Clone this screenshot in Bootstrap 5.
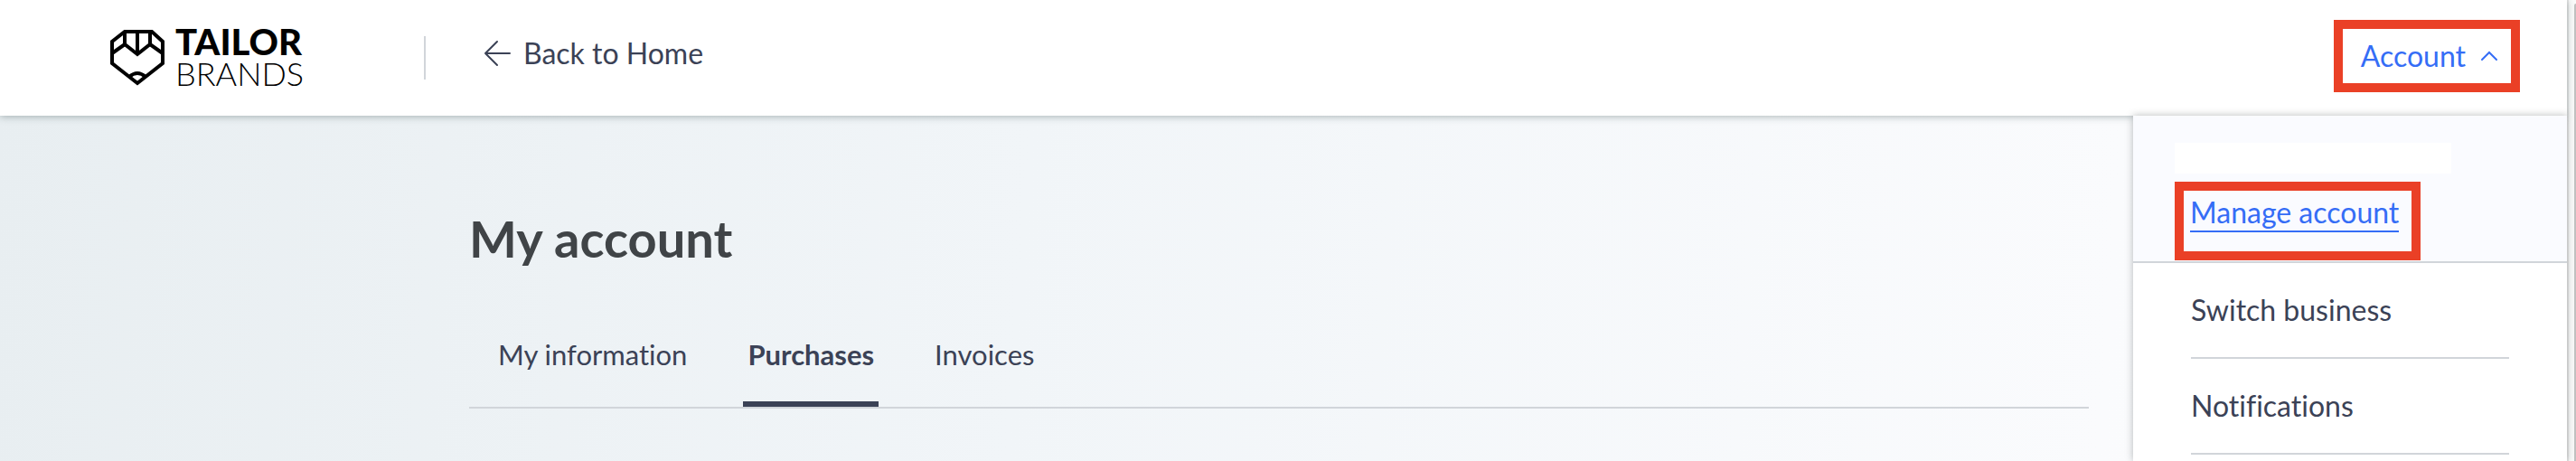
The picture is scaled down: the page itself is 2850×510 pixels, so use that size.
<!DOCTYPE html>
<html lang="en">
<head>
<meta charset="utf-8">
<meta name="viewport" content="width=device-width, initial-scale=1">
<title>My account</title>
<link href="https://cdn.jsdelivr.net/npm/bootstrap@5.3.0/dist/css/bootstrap.min.css" rel="stylesheet">
<style>
  :root { --ink: #3b4256; --line: #d1d5da; --brand-blue: #356df6; --mark-red: #ea4026; }
  body { font-family: Lato, "Open Sans", sans-serif; font-size: 32px; line-height: 40px; color: var(--ink); background: #fff; font-variant-ligatures: none; }
  a { color: inherit; text-decoration: none; }
  .page-area { background: linear-gradient(94deg, #e8eef1 0%, #f1f5f8 40%, #fafbfd 82%, #fdfdfe 100%); padding-bottom: 56px; }
  .topbar { height: 128px; padding-left: 122px; padding-right: 52px; box-shadow: 0 1px 8px rgba(40, 60, 60, .36); z-index: 2; }
  .brand-logo { gap: 12px; width: 216px; color: #000; }
  .brand-words { line-height: 35px; }
  .brand-strong { font-size: 40px; font-weight: 900; }
  .brand-thin { font-size: 36px; font-weight: 300; }
  .split { width: 2px; height: 48px; margin-left: 131px; margin-right: 64px; background: var(--line); }
  .back-link { gap: 14px; padding-bottom: 10px; }
  .marked { border: 10px solid var(--mark-red); }
  .account-btn { height: 80px; gap: 16px; padding: 0 14px 0 20px; margin-top: -4px; background: #fff; color: var(--brand-blue); }
  .account-menu { position: absolute; top: 128px; bottom: 0; right: 0; width: 480px; background: #fff; z-index: 3; box-shadow: 0 0 8px rgba(40, 50, 50, .34); }
  .menu-head { background: #fafbff; padding: 30px 46px 0; border-bottom: 2px solid var(--line); }
  .user-name { width: 306px; height: 34px; background: #fff; }
  .manage-box { margin-top: 9px; margin-bottom: 1px; height: 87px; width: 272px; padding: 4px 7px; }
  .manage-link { color: var(--brand-blue); border-bottom: 2px solid; line-height: 40px; }
  .menu-items { padding: 0 64px; }
  .menu-items a { display: block; padding: 32px 0; border-bottom: 2px solid var(--line); }
  .page-scroll { padding-right: 10px; }
  .account-main { max-width: 1792px; padding-top: 100px; }
  .account-main h1 { font-size: 56px; line-height: 72px; font-weight: 700; color: #404447; margin-bottom: 68px; }
  .account-tabs { gap: 62px; padding-left: 32px; border-bottom: 2px solid var(--line); font-size: 31px; }
  .account-tabs a { padding: 4px 0 32px; border-bottom: 6px solid transparent; }
  .account-tabs a.active { padding-left: 5px; padding-right: 5px; font-weight: 700; border-color: var(--ink); }
  .gutter { width: 10px; padding-top: 4px; padding-left: 6px; border-left: 2px solid #e7e7e7; background: #fafafa; }
  .thumb { background: #c1c1c1; border-radius: 4px 0 0 0; }
</style>
</head>
<body>
<div class="d-flex min-vh-100">
  <div class="page-area d-flex flex-column flex-grow-1 position-relative">
    <header class="topbar d-flex align-items-center bg-white position-relative">
      <a href="#" class="brand-logo d-flex align-items-center" aria-label="Tailor Brands home">
        <svg class="flex-shrink-0" width="60" height="64" viewBox="0 0 60 64" fill="none" stroke="#000" stroke-width="4" aria-hidden="true">
          <path d="M16 3H46L58 14V38L30 60L2 38V14Z"/>
          <path d="M2 27L16 17L30 28L44 17L58 27M16 3V17M30 3V28M44 3V17M21 53Q30 45 39 53"/>
        </svg>
        <span class="brand-words d-flex flex-column"><span class="brand-strong">TAILOR</span><span class="brand-thin">BRANDS</span></span>
      </a>
      <div class="split"></div>
      <a href="#" class="back-link d-flex align-items-center">
        <svg width="30" height="30" viewBox="0 0 30 30" fill="none" stroke="currentColor" stroke-width="2" stroke-linecap="round" stroke-linejoin="round" aria-hidden="true"><path d="M29 15H2M15 2L2 15L15 28"/></svg>
        Back to Home
      </a>
      <button type="button" class="account-btn marked d-flex align-items-center ms-auto" aria-expanded="true">
        Account
        <svg width="20" height="12" viewBox="0 0 20 12" fill="none" stroke="currentColor" stroke-width="2" stroke-linecap="round" aria-hidden="true"><path d="M2 10L10 2L18 10"/></svg>
      </button>
    </header>
    <nav class="account-menu" aria-label="Account menu">
      <div class="menu-head">
        <div class="user-name"></div>
        <div class="manage-box marked"><a href="#" class="manage-link d-inline-block">Manage account</a></div>
      </div>
      <div class="menu-items"><a href="#">Switch business</a><a href="#">Notifications</a></div>
    </nav>
    <div class="page-scroll">
      <main class="account-main mx-auto">
        <h1>My account</h1>
        <nav class="account-tabs d-flex" aria-label="Account sections"><a href="#">My information</a><a href="#" class="active" aria-current="page">Purchases</a><a href="#">Invoices</a></nav>
      </main>
    </div>
  </div>
  <div class="gutter d-flex flex-shrink-0"><div class="thumb flex-grow-1"></div></div>
</div>
<script src="https://cdn.jsdelivr.net/npm/bootstrap@5.3.0/dist/js/bootstrap.bundle.min.js"></script>
</body>
</html>
